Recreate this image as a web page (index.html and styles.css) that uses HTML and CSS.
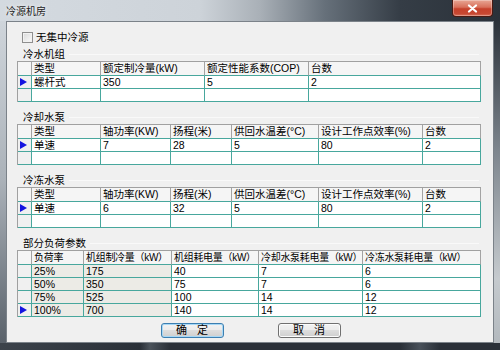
FILE: index.html
```html
<!DOCTYPE html>
<html>
<head>
   <meta charset="utf-8">
   <title>冷源机房</title>
   <link rel="stylesheet" href="styles.css">
</head>
<body>
   <!-- 冷源机房 对话框 -->
   <div class="window">
       <!-- 标题栏 -->
       <div class="titlebar">
           <span class="title">冷源机房</span>
           <button class="close-button" title="关闭">
               <svg width="11" height="9" viewBox="0 0 11 9"><path d="M2 1.5 L9 7.5 M9 1.5 L2 7.5" stroke="#fff" stroke-width="2.2" stroke-linecap="round"/></svg>
           </button>
       </div>

       <div class="frame">
           <div class="frame-left"></div>
           <div class="client">
               <!-- 无集中冷源 -->
               <label class="check-row">
                   <span class="check-box"></span>
                   <span>无集中冷源</span>
               </label>

               <!-- 冷水机组 -->
               <div class="group group-first">
                   <div class="group-title">冷水机组</div>
                   <table class="grid grid-chiller">
                       <colgroup><col><col><col><col><col></colgroup>
                       <tr><th></th><th>类型</th><th>额定制冷量(kW)</th><th>额定性能系数(COP)</th><th>台数</th></tr>
                       <tr><td class="row-head"><span class="marker"></span></td><td>螺杆式</td><td>350</td><td>5</td><td>2</td></tr>
                       <tr><td class="row-head"></td><td></td><td></td><td></td><td></td></tr>
                   </table>
               </div>

               <!-- 冷却水泵 -->
               <div class="group">
                   <div class="group-title">冷却水泵</div>
                   <table class="grid grid-pump">
                       <colgroup><col><col><col><col><col><col><col></colgroup>
                       <tr><th></th><th>类型</th><th>轴功率(KW)</th><th>扬程(米)</th><th>供回水温差(°C)</th><th>设计工作点效率(%)</th><th>台数</th></tr>
                       <tr><td class="row-head"><span class="marker"></span></td><td>单速</td><td>7</td><td>28</td><td>5</td><td>80</td><td>2</td></tr>
                       <tr><td class="row-head"></td><td></td><td></td><td></td><td></td><td></td><td></td></tr>
                   </table>
               </div>

               <!-- 冷冻水泵 -->
               <div class="group">
                   <div class="group-title">冷冻水泵</div>
                   <table class="grid grid-pump">
                       <colgroup><col><col><col><col><col><col><col></colgroup>
                       <tr><th></th><th>类型</th><th>轴功率(KW)</th><th>扬程(米)</th><th>供回水温差(°C)</th><th>设计工作点效率(%)</th><th>台数</th></tr>
                       <tr><td class="row-head"><span class="marker"></span></td><td>单速</td><td>6</td><td>32</td><td>5</td><td>80</td><td>2</td></tr>
                       <tr><td class="row-head"></td><td></td><td></td><td></td><td></td><td></td><td></td></tr>
                   </table>
               </div>

               <!-- 部分负荷参数 -->
               <div class="group">
                   <div class="group-title">部分负荷参数</div>
                   <table class="grid grid-load">
                       <colgroup><col><col><col><col><col><col></colgroup>
                       <tr><th></th><th>负荷率</th><th>机组制冷量（kW）</th><th>机组耗电量（kW）</th><th>冷却水泵耗电量（kW）</th><th>冷冻水泵耗电量（kW）</th></tr>
                       <tr><td class="row-head"></td><td class="readonly">25%</td><td class="readonly">175</td><td>40</td><td>7</td><td>6</td></tr>
                       <tr><td class="row-head"></td><td class="readonly">50%</td><td class="readonly">350</td><td>75</td><td>7</td><td>6</td></tr>
                       <tr><td class="row-head"></td><td class="readonly">75%</td><td class="readonly">525</td><td>100</td><td>14</td><td>12</td></tr>
                       <tr><td class="row-head"><span class="marker"></span></td><td class="readonly">100%</td><td class="readonly">700</td><td>140</td><td>14</td><td>12</td></tr>
                   </table>
               </div>

               <!-- 按钮 -->
               <div class="actions">
                   <button class="button default-button">确 定</button>
                   <button class="button">取 消</button>
               </div>
           </div>
           <div class="frame-right"></div>
       </div>
       <div class="frame-bottom"></div>
   </div>
</body>
</html>
```

FILE: styles.css
```css
/* 기본 */
* {
    box-sizing: border-box;
}

body {
    margin: 0;
    font-family: "Liberation Sans", "Noto Sans CJK SC", sans-serif;
    font-size: 10.5px;
    color: #000;
}

/* 창 전체 */
.window {
    width: 500px;
    height: 350px;
    display: flex;
    flex-direction: column;
    background: #2c333b;
}

/* 제목 표시줄 */
.titlebar {
    height: 21px;
    display: flex;
    justify-content: space-between;
    align-items: flex-start;
    padding: 0 7px 0 6px;
    background: linear-gradient(to right, #d4dae0 0%, #cdd3d9 40%, #a9b0b7 52%, #66707a 65%, #353d46 80%, #2a3139 100%);
}

.title {
    padding-top: 5px;
    line-height: 13px;
    font-size: 10px;
    color: #1b1b1b;
    text-shadow: 0 0 4px #fff;
}

/* 닫기 버튼 */
.close-button {
    width: 41px;
    height: 17px;
    padding: 0;
    display: flex;
    align-items: center;
    justify-content: center;
    border: 1px solid #4a1a12;
    border-top: none;
    border-radius: 0 0 4px 4px;
    background: linear-gradient(#e8a694 0%, #d8705b 45%, #c6412b 55%, #c74832 85%, #d8725a 100%);
    box-shadow: inset 0 0 0 1px rgba(255,255,255,0.3);
}

/* 창 테두리 */
.frame {
    flex: 1;
    display: flex;
}

.frame-left {
    width: 6px;
    background: linear-gradient(#cfd5db, #aab1b8 50%, #59616a);
}

.frame-right {
    width: 6px;
    background: linear-gradient(#2b323a, #7d858d 40%, #c5cace 80%, #b3b9be);
}

.frame-bottom {
    height: 7px;
    background: linear-gradient(to right, #3c434b, #2a3038 28%, #4b535b 30%, #2a3038 34%, #2a3038 80%, #49515a 84%, #2a3038 88%);
}

/* 클라이언트 영역 */
.client {
    flex: 1;
    border: 1px solid #7b8289;
    background: #f0f0f0;
    padding: 10px 12px 0 10px;
}

/* 체크박스 */
.check-row {
    display: flex;
    align-items: center;
    gap: 3px;
    height: 11px;
    line-height: 11px;
    margin-left: 5px;
}

.check-box {
    width: 11px;
    height: 11px;
    border: 1px solid #8f8f8f;
    background: linear-gradient(135deg, #d9d9d9, #fbfbfb);
    box-shadow: inset 0 0 0 1px #f2f2f2;
}

/* 그룹 */
.group {
    margin-top: 9px;
}

.group-first {
    margin-top: 5px;
}

.group-title {
    display: flex;
    align-items: center;
    height: 13px;
    line-height: 13px;
    padding-left: 6px;
}

.group-title::after {
    content: "";
    flex: 1;
    margin: 0 2px 0 4px;
    border-top: 1px solid #f9f9f9;
}

/* 표 */
.grid {
    width: 464px;
    table-layout: fixed;
    border-collapse: separate;
    border-spacing: 0;
    border-top: 1px solid #a0a0a0;
    border-left: 1px solid #a0a0a0;
    background: #fff;
}

.grid th,
.grid td {
    padding: 0 0 0 2px;
    text-align: left;
    font-weight: normal;
    white-space: nowrap;
    overflow: hidden;
    border-right: 1px solid #48a79d;
    border-bottom: 1px solid #48a79d;
}

.grid th {
    height: 14px;
    line-height: 13px;
    background: #f5f5f5;
    border-right-color: #a3a3a3;
}

.grid td {
    height: 13px;
    line-height: 12px;
}

.grid td.row-head {
    background: #f0f0f0;
}

.grid td.readonly {
    background: #ecebe6;
}

.grid col:first-child {
    width: 14px;
}

/* 负荷表 제목은 폭이 좁아 조금 줄임 */
.grid-load th {
    font-size: 10px;
    letter-spacing: -0.3px;
}

/* 행 표시 화살표 */
.marker {
    display: block;
    width: 0;
    height: 0;
    border-left: 7px solid #1414e0;
    border-top: 4px solid transparent;
    border-bottom: 4px solid transparent;
}

/* 열 너비 - 冷水机组 */
.grid-chiller col:nth-child(2) { width: 69px; }
.grid-chiller col:nth-child(3) { width: 104px; }
.grid-chiller col:nth-child(4) { width: 104px; }
.grid-chiller col:nth-child(5) { width: 172px; }

/* 열 너비 - 水泵 */
.grid-pump col:nth-child(2) { width: 69px; }
.grid-pump col:nth-child(3) { width: 70px; }
.grid-pump col:nth-child(4) { width: 61px; }
.grid-pump col:nth-child(5) { width: 87px; }
.grid-pump col:nth-child(6) { width: 104px; }
.grid-pump col:nth-child(7) { width: 58px; }

/* 열 너비 - 部分负荷 */
.grid-load col:nth-child(2) { width: 52px; }
.grid-load col:nth-child(3) { width: 88px; }
.grid-load col:nth-child(4) { width: 87px; }
.grid-load col:nth-child(5) { width: 104px; }
.grid-load col:nth-child(6) { width: 118px; }

/* 버튼 */
.actions {
    display: flex;
    justify-content: center;
    gap: 54px;
    margin-top: 6px;
    padding-left: 3px;
}

.button {
    width: 63px;
    height: 15px;
    padding: 0;
    font: inherit;
    font-size: 11px;
    line-height: 13px;
    word-spacing: 7px;
    color: #000;
    border: 1px solid #707070;
    border-radius: 3px;
    background: linear-gradient(#f2f2f2 0%, #ebebeb 49%, #dddddd 50%, #cfcfcf 100%);
    box-shadow: inset 0 0 0 1px #fcfcfc;
}

.default-button {
    border-color: #3c7fb1;
    box-shadow: inset 0 0 0 1px #a7d8f6;
}
```
